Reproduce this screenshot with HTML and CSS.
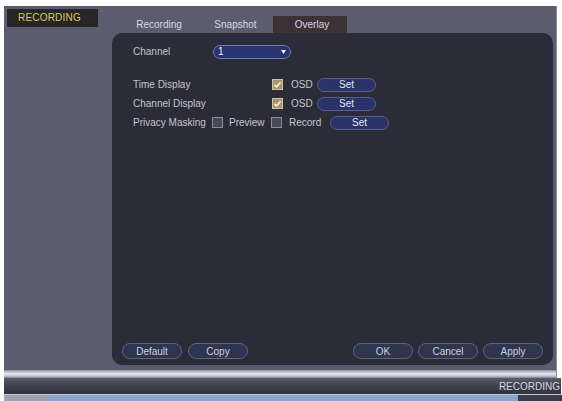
FILE: index.html
```html
<!DOCTYPE html>
<html>
<head>
<meta charset="utf-8">
<link rel="stylesheet" href="styles.css">
</head>
<body>
<div class="screen">
  <div class="top">
    <div class="brand">RECORDING</div>
    <div class="tabs">
      <div class="tab t1">Recording</div>
      <div class="tab t2">Snapshot</div>
      <div class="tab t3 active">Overlay</div>
    </div>
  </div>
  <div class="main">
    <div class="side"></div>
    <div class="panel">
      <div class="row channel-row">
        <span class="lbl w80">Channel</span>
        <div class="select"><span>1</span>
          <svg class="arrow" width="5" height="4" viewBox="0 0 5 4"><path d="M0 0H5L2.5 4Z" fill="#f0f0f8"/></svg>
        </div>
      </div>
      <div class="row first">
        <span class="lbl w139">Time Display</span>
        <span class="cb checked"><svg width="11" height="11" viewBox="0 0 11 11"><path d="M2.5 5.8L4.6 7.8L8.6 3.2" fill="none" stroke="#f4f0e0" stroke-width="1.6"/></svg></span>
        <span class="lbl osd">OSD</span>
        <button class="set">Set</button>
      </div>
      <div class="row">
        <span class="lbl w139">Channel Display</span>
        <span class="cb checked"><svg width="11" height="11" viewBox="0 0 11 11"><path d="M2.5 5.8L4.6 7.8L8.6 3.2" fill="none" stroke="#f4f0e0" stroke-width="1.6"/></svg></span>
        <span class="lbl osd">OSD</span>
        <button class="set">Set</button>
      </div>
      <div class="row">
        <span class="lbl w80p">Privacy Masking</span>
        <span class="cb"></span>
        <span class="lbl prev">Preview</span>
        <span class="cb"></span>
        <span class="lbl rec">Record</span>
        <button class="set">Set</button>
      </div>
      <div class="actions">
        <div class="group">
          <button class="act">Default</button>
          <button class="act">Copy</button>
        </div>
        <div class="group">
          <button class="act">OK</button>
          <button class="act">Cancel</button>
          <button class="act">Apply</button>
        </div>
      </div>
    </div>
  </div>
  <div class="lightbar"></div>
  <div class="darkbar"><span>RECORDING</span></div>
</div>
<div class="bottom"><div class="bl"></div><div class="bb"></div><div class="br"></div></div>
</body>
</html>
```
FILE: styles.css
```css
html, body {
  margin: 0;
  padding: 0;
  background: #ffffff;
  width: 562px;
  height: 401px;
  overflow: hidden;
  font-family: "Liberation Sans", Arial, sans-serif;
}
.screen {
  margin: 6px 0 0 4px;
  width: 553px;
  height: 388px;
  background: #5b5d6f;
  border-right: 1px solid #8e909e;
  box-sizing: border-box;
  display: flex;
  flex-direction: column;
}
.top {
  display: flex;
  height: 27px;
  flex: none;
}
.brand {
  margin: 3px 0 0 3px;
  width: 91px;
  height: 18px;
  background: #272526;
  color: #d6cd5c;
  font-size: 10px;
  line-height: 18px;
  padding-left: 11px;
  box-sizing: border-box;
  letter-spacing: 0.2px;
}
.tabs {
  display: flex;
  margin-left: 22px;
  margin-top: 10px;
}
.tab {
  height: 17px;
  line-height: 17px;
  font-size: 10px;
  color: #d8d8e0;
  text-align: center;
}
.t1 { width: 78px; }
.t2 { width: 75px; }
.t3 { width: 74px; }
.tab.active {
  background: #3b3236;
  padding-left: 4px;
  box-sizing: border-box;
}
.main {
  display: flex;
  height: 332px;
  flex: none;
}
.side {
  width: 108px;
  flex: none;
}
.panel {
  width: 441px;
  background: #2b2c37;
  border-radius: 10px;
  display: flex;
  flex-direction: column;
  padding: 9px 10px 6px 21px;
  box-sizing: border-box;
}
.row {
  display: flex;
  align-items: center;
  height: 19px;
  flex: none;
}
.row.first { margin-top: 14px; }
.lbl {
  font-size: 10px;
  color: #c4c5ce;
  white-space: nowrap;
  flex: none;
}
.w80 { width: 80px; }
.w139 { width: 139px; }
.w80p { width: 79px; }
.osd { width: 26px; }
.prev { width: 42px; }
.rec { width: 41px; }
.select {
  width: 78px;
  height: 14px;
  box-sizing: border-box;
  background: #29336f;
  border: 1px solid #6f7db0;
  border-radius: 7px;
  display: flex;
  align-items: center;
  justify-content: space-between;
  padding: 0 4px 0 4px;
  color: #f4f4fa;
  font-size: 10px;
}
.arrow { display: block; }
.cb {
  width: 11px;
  height: 11px;
  box-sizing: border-box;
  border: 1px solid #8c8d9a;
  background: #484957;
  margin-right: 7px;
  flex: none;
  display: block;
}
.cb svg { display: block; margin: -1px; }
.cb.checked {
  background: #a8976c;
  border-color: #cfc39a;
  margin-right: 8px;
}
.w80p + .cb { margin-right: 6px; }
button {
  font-family: "Liberation Sans", Arial, sans-serif;
  font-size: 10px;
  padding: 0;
  cursor: default;
}
.set {
  width: 59px;
  height: 14px;
  background: #2a3268;
  border: 1px solid #56618f;
  border-radius: 7px;
  color: #e6e6ee;
  flex: none;
}
.actions {
  margin-top: auto;
  display: flex;
  justify-content: space-between;
  margin-left: -11px;
}
.group {
  display: flex;
  gap: 6px;
}
.group + .group { gap: 5px; }
.act {
  width: 60px;
  height: 16px;
  background: #30354f;
  border: 1px solid #5c6282;
  border-radius: 8px;
  color: #cdd0dc;
}
.lightbar {
  margin-top: 5px;
  height: 8px;
  flex: none;
  background: linear-gradient(#8e909c, #e4e4ea 45%, #c4c6ce 75%, #7c7e8c);
}
.darkbar {
  height: 16px;
  flex: none;
  margin-right: -5px;
  background: linear-gradient(#595b6c, #3e404e 50%, #30323e);
  display: flex;
  justify-content: flex-end;
  align-items: center;
}
.darkbar span {
  font-size: 10px;
  color: #d6d8e0;
  margin-right: 1px;
}
.bottom {
  display: flex;
  height: 7px;
  margin-left: 4px;
  border-top: 1px solid #c4c8d4;
}
.bl { width: 44px; background: #9ea2b2; }
.bb { width: 470px; background: #8aa4cc; }
.br { flex: 1; background: #3a3c4a; }
```
